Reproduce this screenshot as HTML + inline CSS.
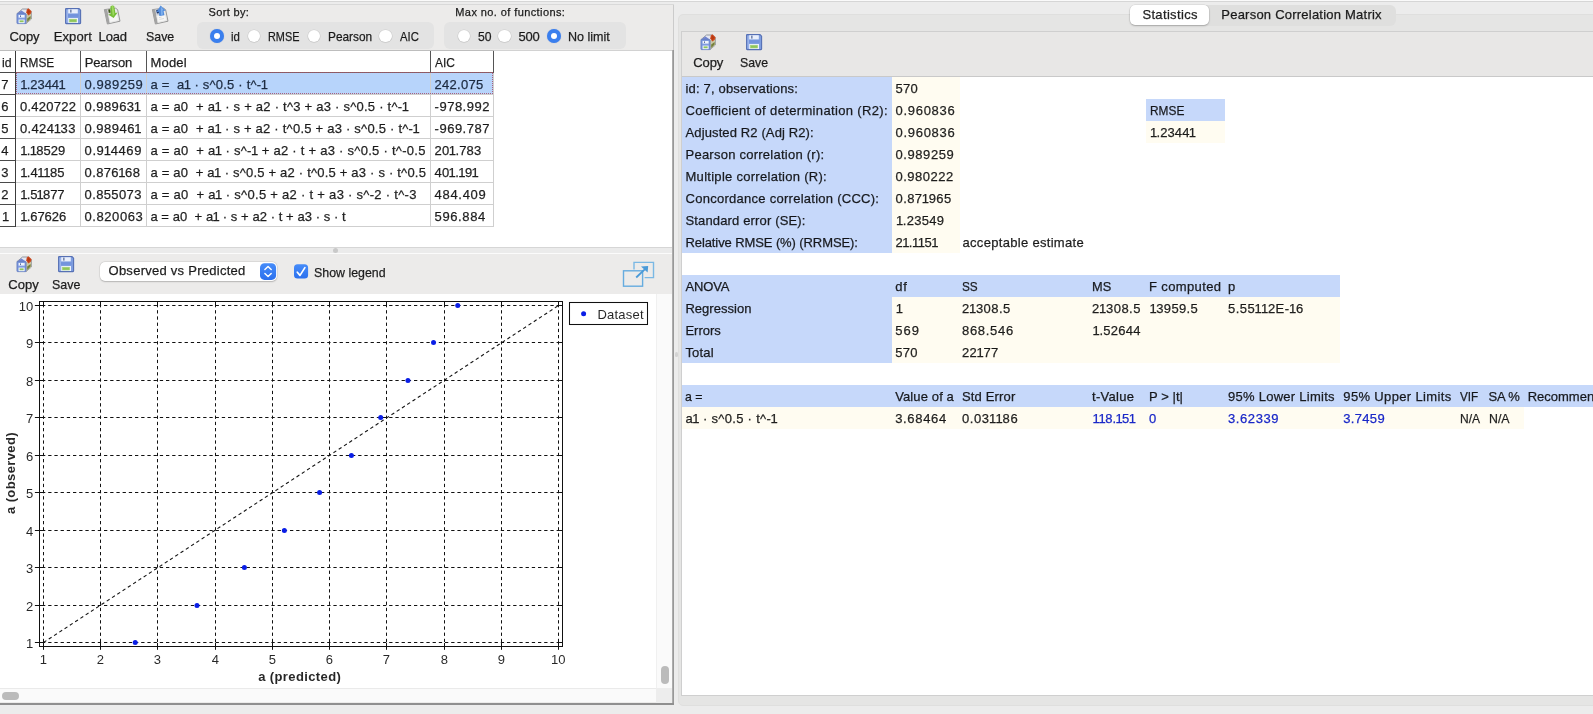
<!DOCTYPE html>
<html><head><meta charset="utf-8"><title>Statistics</title>
<style>
html,body{margin:0;padding:0;}
body{width:1593px;height:714px;overflow:hidden;background:#ececec;position:relative;font-family:"Liberation Sans",sans-serif;font-size:13px;color:rgba(0,0,0,.85);}
#app{position:absolute;left:0;top:0;width:1593px;height:714px;overflow:hidden;will-change:transform;}
.r{position:absolute;}
.t{position:absolute;white-space:pre;line-height:15px;-webkit-text-stroke:.25px currentColor;}
svg{overflow:visible;}
svg text{font-family:"Liberation Sans",sans-serif;}
</style></head><body>
<div id="app">
<div class="r" style="left:0px;top:0px;width:1593px;height:1px;background:#fafafa;"></div>
<div class="r" style="left:0px;top:1px;width:1593px;height:1px;background:#d6d6d6;"></div>
<div class="r" style="left:0px;top:4px;width:674px;height:701px;background:#ecebea;border-top:1px solid #d9d9d9;box-sizing:border-box;"></div>
<div class="r" style="left:673px;top:5px;width:1px;height:46px;background:#cbcbcb;"></div>
<div class="r" style="left:672px;top:50px;width:1px;height:655px;background:#adadad;"></div>
<div class="r" style="left:673px;top:50px;width:1px;height:655px;background:#989898;"></div>
<div class="r" style="left:0px;top:703px;width:674px;height:2px;background:#8f8f8f;"></div>
<div class="r" style="left:0px;top:51px;width:672px;height:196px;background:#fff;"></div>
<div class="r" style="left:0px;top:247px;width:672px;height:1px;background:#d6d6d6;"></div>
<div class="r" style="left:0px;top:248px;width:672px;height:5px;background:#ebebeb;"></div>
<div class="r" style="left:0px;top:253px;width:672px;height:1px;background:#fbfbfb;"></div>
<div class="r" style="left:332.5px;top:248px;width:5px;height:5px;background:#c9c9c9;border-radius:50%;"></div>
<div class="r" style="left:674.5px;top:352px;width:3.5px;height:5px;background:#d3d3d3;border-radius:2px;"></div>
<svg class="r" style="left:16px;top:8px" width="16" height="16" viewBox="0 0 16 16">
<path d="M1 5.6 L6.5 1 H12.5 L15.4 4 V11 L10 15.6 Z" fill="#e4e7f2" stroke="#8a8f98" stroke-width=".9"/>
<path d="M10 6 L15.2 4.2 V11 L10 15.4Z" fill="#c9c7a6"/>
<path d="M11.2 10.5 L14.6 8 V10.6 L11.2 14Z" fill="#75803a"/>
<path d="M1 5.6 L5.4 2.6 L10 5.6Z" fill="#6f83cf"/>
<rect x="1" y="5.6" width="9" height="10" rx=".6" fill="#7f9be0" stroke="#6079bf" stroke-width=".9"/>
<rect x="2.6" y="7" width="6" height="2.6" fill="#eef3fd"/>
<rect x="4" y="7.4" width="1" height="1.6" fill="#5d6f9c"/>
<rect x="2.6" y="11.6" width="6" height="3.6" fill="#eef3fd"/>
<rect x="3.6" y="12.4" width="4" height="1.8" fill="#8fc65a"/>
<path d="M12.4 0.2 L15.6 3.2 L14.8 5.8 L12.4 7.6 L10.2 4.6 L10.8 1.6Z" fill="#cf4a1e"/>
<path d="M12.2 1.2 L14.4 3.4 L12.6 6.2 L11.2 4.2Z" fill="#b83a14"/>
</svg>
<svg class="r" style="left:65px;top:8px" width="16" height="16" viewBox="0 0 16 16">
<path d="M1.2 0.6 H14 L15.6 2.2 V15 Q15.6 15.6 15 15.6 H1.2 Q0.6 15.6 0.6 15 V1.2 Q0.6 0.6 1.2 0.6Z" fill="#7f9ee0" stroke="#5670b4" stroke-width="1.1"/>
<rect x="1.6" y="1.6" width="1.2" height="13" fill="#a9bff0" opacity=".8"/>
<rect x="3.2" y="1.2" width="9.6" height="4.2" fill="#e9effc"/>
<rect x="5.2" y="1.6" width="1.3" height="3" fill="#5d6f9c"/>
<rect x="3" y="6.2" width="10.6" height="2.6" fill="#6c8fdc" opacity=".7"/>
<rect x="3.2" y="10" width="9.8" height="5" fill="#eef3fd"/>
<rect x="4.4" y="11.2" width="7.2" height="2.8" fill="#8fc65a" stroke="#a5d27a" stroke-width=".6"/>
</svg>
<svg class="r" style="left:103px;top:5px" width="18" height="20" viewBox="0 0 18 20">
<path d="M1.4 4.6 L12.6 3.2 L14.6 4.6 L17 16.2 L4.4 19 Z" fill="#e9e9e8" stroke="#8e8e8e" stroke-width=".9"/>
<path d="M1.4 4.6 L4.2 4.2 L6.8 18.4 L4.4 19Z" fill="#a3a3a3"/>
<path d="M4.6 4.4 L10.4 3.6 L11.4 9.4 L5.6 10.4Z" fill="#d6d6d6"/>
<path d="M5.2 4.6 L7.2 4.3 L7.8 7.6 L5.8 8Z" fill="#3d5518"/>
<path d="M5.6 10.8 L14.4 9.2 L15.6 15.4 L7 17.4Z" fill="#f6f6f5" stroke="#dcdcdc" stroke-width=".5"/>
<path d="M7.4 1.4 Q9.4 0 11.2 1 L12.4 8 L14.6 7.6 L10.6 13 L5.2 9.4 L7.6 9 Z" fill="#74bd36"/>
<path d="M8.6 1.2 Q9.6 .6 10.4 1 L11.4 9 L9.8 11.6Z" fill="#a6de66" opacity=".85"/>
</svg>
<svg class="r" style="left:151px;top:5px" width="18" height="20" viewBox="0 0 18 20">
<path d="M1.4 4.6 L12.6 3.2 L14.6 4.6 L17 16.2 L4.4 19 Z" fill="#e9e9e8" stroke="#8e8e8e" stroke-width=".9"/>
<path d="M1.4 4.6 L4.2 4.2 L6.8 18.4 L4.4 19Z" fill="#a3a3a3"/>
<path d="M4.6 4.4 L10.4 3.6 L11.4 9.4 L5.6 10.4Z" fill="#c8cfdc"/>
<path d="M5.2 5 L7.6 4.4 L8.4 8 L6 8.6Z" fill="#1f3566"/>
<path d="M5.6 10.8 L14.4 9.2 L15.6 15.4 L7 17.4Z" fill="#f6f6f5" stroke="#dcdcdc" stroke-width=".5"/>
<path d="M8 12.6 L10.6 12.1 M8.4 14.4 L13 13.5" stroke="#d0d0d0" stroke-width=".7"/>
<path d="M9.6 .6 L14.8 5.6 L12.6 6 L13.4 10.2 L8.4 11 L7.6 6.8 L5.4 7.2 Z" fill="#528cdc"/>
<path d="M9.8 1.6 L12.6 5 L11.4 5.4 L12 9.6 L10 10Z" fill="#86b6f0" opacity=".85"/>
</svg>
<span class="t " style="left:9.40px;top:28.50px;letter-spacing:-0.058px;">Copy</span>
<span class="t " style="left:53.70px;top:28.50px;letter-spacing:0.107px;">Export</span>
<span class="t " style="left:98.60px;top:28.50px;letter-spacing:-0.179px;">Load</span>
<span class="t " style="left:146.40px;top:28.50px;transform:scaleX(0.9519);transform-origin:0 0;">Save</span>
<span class="t " style="left:208.50px;top:5.85px;font-size:11px;line-height:13px;letter-spacing:0.352px;">Sort by:</span>
<div class="r" style="left:197px;top:22px;width:237px;height:26.5px;background:#e3e3e3;border-radius:6px;"></div>
<div class="r" style="left:209.9px;top:29px;width:14px;height:14px;border-radius:50%;background:#3a7fee;box-shadow:0 0 1px rgba(40,90,200,.4);"></div>
<div class="r" style="left:213.8px;top:32.9px;width:6.2px;height:6.2px;border-radius:50%;background:#fff;"></div>
<span class="t " style="left:230.50px;top:28.80px;transform:scaleX(0.8790);transform-origin:0 0;">id</span>
<div class="r" style="left:247.6px;top:29.7px;width:12.6px;height:12.6px;border-radius:50%;background:#fff;box-shadow:0 0 0 .6px rgba(0,0,0,.09),0 .5px 1px rgba(0,0,0,.1);"></div>
<span class="t " style="left:267.70px;top:28.80px;transform:scaleX(0.8359);transform-origin:0 0;">RMSE</span>
<div class="r" style="left:307.7px;top:29.7px;width:12.6px;height:12.6px;border-radius:50%;background:#fff;box-shadow:0 0 0 .6px rgba(0,0,0,.09),0 .5px 1px rgba(0,0,0,.1);"></div>
<span class="t " style="left:327.80px;top:28.80px;transform:scaleX(0.9125);transform-origin:0 0;">Pearson</span>
<div class="r" style="left:379.2px;top:29.7px;width:12.6px;height:12.6px;border-radius:50%;background:#fff;box-shadow:0 0 0 .6px rgba(0,0,0,.09),0 .5px 1px rgba(0,0,0,.1);"></div>
<span class="t " style="left:399.50px;top:28.80px;transform:scaleX(0.8669);transform-origin:0 0;">AIC</span>
<span class="t " style="left:455.30px;top:5.85px;font-size:11px;line-height:13px;letter-spacing:0.405px;">Max no. of functions:</span>
<div class="r" style="left:444px;top:22px;width:182px;height:26.5px;background:#e3e3e3;border-radius:6px;"></div>
<div class="r" style="left:457.7px;top:29.7px;width:12.6px;height:12.6px;border-radius:50%;background:#fff;box-shadow:0 0 0 .6px rgba(0,0,0,.09),0 .5px 1px rgba(0,0,0,.1);"></div>
<span class="t " style="left:477.70px;top:28.80px;transform:scaleX(0.9351);transform-origin:0 0;">50</span>
<div class="r" style="left:498.4px;top:29.7px;width:12.6px;height:12.6px;border-radius:50%;background:#fff;box-shadow:0 0 0 .6px rgba(0,0,0,.09),0 .5px 1px rgba(0,0,0,.1);"></div>
<span class="t " style="left:518.50px;top:28.80px;letter-spacing:-0.194px;">500</span>
<div class="r" style="left:547px;top:29px;width:14px;height:14px;border-radius:50%;background:#3a7fee;box-shadow:0 0 1px rgba(40,90,200,.4);"></div>
<div class="r" style="left:550.9px;top:32.9px;width:6.2px;height:6.2px;border-radius:50%;background:#fff;"></div>
<span class="t " style="left:567.70px;top:28.80px;transform:scaleX(0.9651);transform-origin:0 0;">No limit</span>
<div class="r" style="left:0px;top:50px;width:672px;height:1px;background:#d2d2d2;"></div>
<div class="r" style="left:0px;top:50px;width:494px;height:1px;background:#bdbdbd;"></div>
<div class="r" style="left:16px;top:73px;width:477px;height:21px;background:#b7d4fb;"></div>
<div class="r" style="left:0px;top:72px;width:15px;height:1px;background:#4a4a4a;"></div>
<div class="r" style="left:16px;top:72px;width:478px;height:1px;background:#7d6a6a;"></div>
<div class="r" style="left:0px;top:94px;width:15px;height:1px;background:#4a4a4a;"></div>
<div class="r" style="left:16px;top:94px;width:478px;height:1px;background:#cfcfcf;"></div>
<div class="r" style="left:0px;top:116px;width:15px;height:1px;background:#4a4a4a;"></div>
<div class="r" style="left:16px;top:116px;width:478px;height:1px;background:#cfcfcf;"></div>
<div class="r" style="left:0px;top:138px;width:15px;height:1px;background:#4a4a4a;"></div>
<div class="r" style="left:16px;top:138px;width:478px;height:1px;background:#cfcfcf;"></div>
<div class="r" style="left:0px;top:160px;width:15px;height:1px;background:#4a4a4a;"></div>
<div class="r" style="left:16px;top:160px;width:478px;height:1px;background:#cfcfcf;"></div>
<div class="r" style="left:0px;top:182px;width:15px;height:1px;background:#4a4a4a;"></div>
<div class="r" style="left:16px;top:182px;width:478px;height:1px;background:#cfcfcf;"></div>
<div class="r" style="left:0px;top:204px;width:15px;height:1px;background:#4a4a4a;"></div>
<div class="r" style="left:16px;top:204px;width:478px;height:1px;background:#cfcfcf;"></div>
<div class="r" style="left:0px;top:226px;width:15px;height:1px;background:#4a4a4a;"></div>
<div class="r" style="left:16px;top:226px;width:478px;height:1px;background:#cfcfcf;"></div>
<div class="r" style="left:15px;top:51px;width:1px;height:176px;background:#3c3c3c;"></div>
<div class="r" style="left:80px;top:51px;width:1px;height:22px;background:#555;"></div>
<div class="r" style="left:80px;top:73px;width:1px;height:154px;background:#cfcfcf;"></div>
<div class="r" style="left:146px;top:51px;width:1px;height:22px;background:#555;"></div>
<div class="r" style="left:146px;top:73px;width:1px;height:154px;background:#cfcfcf;"></div>
<div class="r" style="left:430px;top:51px;width:1px;height:22px;background:#555;"></div>
<div class="r" style="left:430px;top:73px;width:1px;height:154px;background:#cfcfcf;"></div>
<div class="r" style="left:493px;top:51px;width:1px;height:22px;background:#555;"></div>
<div class="r" style="left:493px;top:73px;width:1px;height:154px;background:#cfcfcf;"></div>
<div class="r" style="left:15.5px;top:72px;width:477.5px;height:22px;box-sizing:border-box;border:1px dotted rgba(165,70,95,.8);"></div>
<span class="t " style="left:1.50px;top:54.70px;transform:scaleX(0.9481);transform-origin:0 0;">id</span>
<span class="t " style="left:19.60px;top:54.70px;transform:scaleX(0.9105);transform-origin:0 0;">RMSE</span>
<span class="t " style="left:84.70px;top:54.70px;letter-spacing:-0.140px;">Pearson</span>
<span class="t " style="left:150.60px;top:54.70px;letter-spacing:0.141px;">Model</span>
<span class="t " style="left:434.60px;top:54.70px;transform:scaleX(0.9176);transform-origin:0 0;">AIC</span>
<span class="t " style="left:1.30px;top:76.80px;">7</span>
<span class="t " style="left:20.90px;top:76.80px;color:#1d2b40;letter-spacing:-0.033px;"><span style="margin-left:-0.7px;letter-spacing:-0.733px">1</span>.2344<span style="margin-left:-0.7px;letter-spacing:-0.733px">1</span></span>
<span class="t " style="left:84.60px;top:76.80px;color:#1d2b40;letter-spacing:0.550px;">0.989259</span>
<span class="t " style="left:150.40px;top:76.80px;color:#1d2b40;letter-spacing:0.210px;">a =  a<span style="margin-left:-0.7px;letter-spacing:-0.490px">1</span> · s^0.5 · t^-<span style="margin-left:-0.7px;letter-spacing:-0.490px">1</span></span>
<span class="t " style="left:434.60px;top:76.80px;color:#1d2b40;letter-spacing:0.267px;">242.075</span>
<span class="t " style="left:1.30px;top:98.80px;">6</span>
<span class="t " style="left:19.90px;top:98.80px;letter-spacing:0.264px;">0.420722</span>
<span class="t " style="left:84.60px;top:98.80px;letter-spacing:0.407px;">0.98963<span style="margin-left:-0.7px;letter-spacing:-0.293px">1</span></span>
<span class="t " style="left:150.40px;top:98.80px;letter-spacing:0.240px;">a = a0  + a<span style="margin-left:-0.7px;letter-spacing:-0.460px">1</span> · s + a2 · t^3 + a3 · s^0.5 · t^-<span style="margin-left:-0.7px;letter-spacing:-0.460px">1</span></span>
<span class="t " style="left:434.60px;top:98.80px;letter-spacing:0.498px;">-978.992</span>
<span class="t " style="left:1.30px;top:120.80px;">5</span>
<span class="t " style="left:19.90px;top:120.80px;letter-spacing:0.379px;">0.424<span style="margin-left:-0.7px;letter-spacing:-0.321px">1</span>33</span>
<span class="t " style="left:84.60px;top:120.80px;letter-spacing:0.464px;">0.98946<span style="margin-left:-0.7px;letter-spacing:-0.236px">1</span></span>
<span class="t " style="left:150.40px;top:120.80px;letter-spacing:0.228px;">a = a0  + a<span style="margin-left:-0.7px;letter-spacing:-0.472px">1</span> · s + a2 · t^0.5 + a3 · s^0.5 · t^-<span style="margin-left:-0.7px;letter-spacing:-0.472px">1</span></span>
<span class="t " style="left:434.60px;top:120.80px;letter-spacing:0.498px;">-969.787</span>
<span class="t " style="left:1.30px;top:142.80px;">4</span>
<span class="t " style="left:20.90px;top:142.80px;"><span style="margin-left:-0.7px;letter-spacing:-0.700px">1</span>.<span style="margin-left:-0.7px;letter-spacing:-0.700px">1</span>8529</span>
<span class="t " style="left:84.60px;top:142.80px;letter-spacing:0.564px;">0.9<span style="margin-left:-0.7px;letter-spacing:-0.136px">1</span>4469</span>
<span class="t " style="left:150.40px;top:142.80px;letter-spacing:0.266px;">a = a0  + a<span style="margin-left:-0.7px;letter-spacing:-0.434px">1</span> · s^-<span style="margin-left:-0.7px;letter-spacing:-0.434px">1</span> + a2 · t + a3 · s^0.5 · t^-0.5</span>
<span class="t " style="left:434.60px;top:142.80px;letter-spacing:0.167px;">20<span style="margin-left:-0.7px;letter-spacing:-0.533px">1</span>.783</span>
<span class="t " style="left:1.30px;top:164.80px;">3</span>
<span class="t " style="left:20.90px;top:164.80px;letter-spacing:0.117px;"><span style="margin-left:-0.7px;letter-spacing:-0.583px">1</span>.4<span style="margin-left:-0.7px;letter-spacing:-0.583px">1</span><span style="margin-left:-0.7px;letter-spacing:-0.583px">1</span>85</span>
<span class="t " style="left:84.60px;top:164.80px;letter-spacing:0.350px;">0.876<span style="margin-left:-0.7px;letter-spacing:-0.350px">1</span>68</span>
<span class="t " style="left:150.40px;top:164.80px;letter-spacing:0.203px;">a = a0  + a<span style="margin-left:-0.7px;letter-spacing:-0.497px">1</span> · s^0.5 + a2 · t^0.5 + a3 · s · t^0.5</span>
<span class="t " style="left:434.60px;top:164.80px;letter-spacing:0.100px;">40<span style="margin-left:-0.7px;letter-spacing:-0.600px">1</span>.<span style="margin-left:-0.7px;letter-spacing:-0.600px">1</span>9<span style="margin-left:-0.7px;letter-spacing:-0.600px">1</span></span>
<span class="t " style="left:1.30px;top:186.80px;">2</span>
<span class="t " style="left:20.90px;top:186.80px;letter-spacing:-0.100px;"><span style="margin-left:-0.7px;letter-spacing:-0.800px">1</span>.5<span style="margin-left:-0.7px;letter-spacing:-0.800px">1</span>877</span>
<span class="t " style="left:84.60px;top:186.80px;letter-spacing:0.364px;">0.855073</span>
<span class="t " style="left:150.40px;top:186.80px;letter-spacing:0.288px;">a = a0  + a<span style="margin-left:-0.7px;letter-spacing:-0.412px">1</span> · s^0.5 + a2 · t + a3 · s^-2 · t^-3</span>
<span class="t " style="left:434.60px;top:186.80px;letter-spacing:0.683px;">484.409</span>
<span class="t " style="left:2.00px;top:208.80px;">1</span>
<span class="t " style="left:20.90px;top:208.80px;letter-spacing:-0.050px;"><span style="margin-left:-0.7px;letter-spacing:-0.750px">1</span>.67626</span>
<span class="t " style="left:84.60px;top:208.80px;letter-spacing:0.550px;">0.820063</span>
<span class="t " style="left:150.40px;top:208.80px;letter-spacing:0.060px;">a = a0  + a<span style="margin-left:-0.7px;letter-spacing:-0.640px">1</span> · s + a2 · t + a3 · s · t</span>
<span class="t " style="left:434.60px;top:208.80px;letter-spacing:0.600px;">596.884</span>
<svg class="r" style="left:16px;top:256px" width="16" height="16" viewBox="0 0 16 16">
<path d="M1 5.6 L6.5 1 H12.5 L15.4 4 V11 L10 15.6 Z" fill="#e4e7f2" stroke="#8a8f98" stroke-width=".9"/>
<path d="M10 6 L15.2 4.2 V11 L10 15.4Z" fill="#c9c7a6"/>
<path d="M11.2 10.5 L14.6 8 V10.6 L11.2 14Z" fill="#75803a"/>
<path d="M1 5.6 L5.4 2.6 L10 5.6Z" fill="#6f83cf"/>
<rect x="1" y="5.6" width="9" height="10" rx=".6" fill="#7f9be0" stroke="#6079bf" stroke-width=".9"/>
<rect x="2.6" y="7" width="6" height="2.6" fill="#eef3fd"/>
<rect x="4" y="7.4" width="1" height="1.6" fill="#5d6f9c"/>
<rect x="2.6" y="11.6" width="6" height="3.6" fill="#eef3fd"/>
<rect x="3.6" y="12.4" width="4" height="1.8" fill="#8fc65a"/>
<path d="M12.4 0.2 L15.6 3.2 L14.8 5.8 L12.4 7.6 L10.2 4.6 L10.8 1.6Z" fill="#cf4a1e"/>
<path d="M12.2 1.2 L14.4 3.4 L12.6 6.2 L11.2 4.2Z" fill="#b83a14"/>
</svg>
<svg class="r" style="left:58px;top:256px" width="16" height="16" viewBox="0 0 16 16">
<path d="M1.2 0.6 H14 L15.6 2.2 V15 Q15.6 15.6 15 15.6 H1.2 Q0.6 15.6 0.6 15 V1.2 Q0.6 0.6 1.2 0.6Z" fill="#7f9ee0" stroke="#5670b4" stroke-width="1.1"/>
<rect x="1.6" y="1.6" width="1.2" height="13" fill="#a9bff0" opacity=".8"/>
<rect x="3.2" y="1.2" width="9.6" height="4.2" fill="#e9effc"/>
<rect x="5.2" y="1.6" width="1.3" height="3" fill="#5d6f9c"/>
<rect x="3" y="6.2" width="10.6" height="2.6" fill="#6c8fdc" opacity=".7"/>
<rect x="3.2" y="10" width="9.8" height="5" fill="#eef3fd"/>
<rect x="4.4" y="11.2" width="7.2" height="2.8" fill="#8fc65a" stroke="#a5d27a" stroke-width=".6"/>
</svg>
<span class="t " style="left:8.30px;top:277.00px;letter-spacing:0.075px;">Copy</span>
<span class="t " style="left:51.50px;top:277.00px;transform:scaleX(0.9553);transform-origin:0 0;">Save</span>
<div class="r" style="left:100px;top:261.8px;width:177.4px;height:19.3px;border-radius:5px;background:#fff;box-shadow:0 0 0 .5px rgba(0,0,0,.08),0 .5px 1.5px rgba(0,0,0,.2);"></div>
<svg class="r" style="left:0;top:0" width="672" height="300" viewBox="0 0 672 300"><defs><linearGradient id="bg1" x1="0" y1="0" x2="0" y2="1"><stop offset="0" stop-color="#468cf9"/><stop offset="1" stop-color="#2b70ee"/></linearGradient></defs><rect x="260" y="263.3" width="16.1" height="16.6" rx="4.5" fill="url(#bg1)"/><path d="M264.9 269.5 L268.05 266.5 L271.2 269.5 M264.9 273.5 L268.05 276.5 L271.2 273.5" fill="none" stroke="#fff" stroke-width="1.45" stroke-linecap="round" stroke-linejoin="round"/><rect x="294" y="264.3" width="14.1" height="14.3" rx="3.5" fill="url(#bg1)"/><path d="M297.3 272.2 L300 275.4 L304.9 267.6" fill="none" stroke="#fff" stroke-width="1.7" stroke-linecap="round" stroke-linejoin="round"/></svg>
<span class="t " style="left:108.50px;top:263.30px;letter-spacing:0.265px;">Observed vs Predicted</span>
<span class="t " style="left:314.40px;top:265.00px;transform:scaleX(0.9523);transform-origin:0 0;">Show legend</span>
<svg class="r" style="left:616px;top:256px" width="45" height="36" viewBox="616 256 45 36">
<path d="M634 269.6 V262.4 H653.5 V277.6 H644.6" fill="none" stroke="#7ab8e4" stroke-width="1.4"/>
<rect x="623.5" y="270.8" width="19.1" height="15.4" fill="none" stroke="#66acdf" stroke-width="1.4"/>
<path d="M636.2 277.5 L645 269.2" stroke="#4a9ad8" stroke-width="1.8" fill="none"/>
<path d="M641 266.4 L648.2 266.1 L647.6 272.6 Z" fill="#4a9ad8"/>
</svg>
<div class="r" style="left:0px;top:294px;width:656px;height:394px;background:#fff;"></div>
<div class="r" style="left:656px;top:294px;width:16px;height:394px;background:#fafafa;border-left:1px solid #f0f0f0;box-sizing:border-box;"></div>
<div class="r" style="left:0px;top:688px;width:672px;height:14px;background:#fafafa;border-top:1px solid #eaeaea;box-sizing:border-box;"></div>
<div class="r" style="left:656px;top:688px;width:16px;height:15px;background:#ededed;"></div>
<div class="r" style="left:1.5px;top:692px;width:17.5px;height:7.5px;background:#bbbbbb;border-radius:4px;"></div>
<div class="r" style="left:661px;top:666px;width:7.5px;height:17.5px;background:#bbbbbb;border-radius:4px;"></div>
<svg class="r" style="left:0;top:0" width="672" height="714" viewBox="0 0 672 714">
<path d="M43.50 304.0 V644.0 M100.50 304.0 V644.0 M157.50 304.0 V644.0 M215.50 304.0 V644.0 M272.50 304.0 V644.0 M329.50 304.0 V644.0 M386.50 304.0 V644.0 M444.50 304.0 V644.0 M501.50 304.0 V644.0 M558.50 304.0 V644.0 M42.0 642.50 H560.5 M42.0 605.50 H560.5 M42.0 567.50 H560.5 M42.0 530.50 H560.5 M42.0 492.50 H560.5 M42.0 455.50 H560.5 M42.0 417.50 H560.5 M42.0 380.50 H560.5 M42.0 342.50 H560.5 M42.0 305.50 H560.5" stroke="#111" stroke-width="1" stroke-dasharray="3.3 2.9" fill="none"/>
<rect x="39.5" y="301.5" width="523.0" height="345.0" fill="none" stroke="#111" stroke-width="1"/>
<path d="M43.50 643.0 V649.8 M43.50 301.5 V304.5 M34.9 642.50 H42.5 M559.5 642.50 H562.5 M100.50 643.0 V649.8 M100.50 301.5 V304.5 M34.9 605.50 H42.5 M559.5 605.50 H562.5 M157.50 643.0 V649.8 M157.50 301.5 V304.5 M34.9 567.50 H42.5 M559.5 567.50 H562.5 M215.50 643.0 V649.8 M215.50 301.5 V304.5 M34.9 530.50 H42.5 M559.5 530.50 H562.5 M272.50 643.0 V649.8 M272.50 301.5 V304.5 M34.9 492.50 H42.5 M559.5 492.50 H562.5 M329.50 643.0 V649.8 M329.50 301.5 V304.5 M34.9 455.50 H42.5 M559.5 455.50 H562.5 M386.50 643.0 V649.8 M386.50 301.5 V304.5 M34.9 417.50 H42.5 M559.5 417.50 H562.5 M444.50 643.0 V649.8 M444.50 301.5 V304.5 M34.9 380.50 H42.5 M559.5 380.50 H562.5 M501.50 643.0 V649.8 M501.50 301.5 V304.5 M34.9 342.50 H42.5 M559.5 342.50 H562.5 M558.50 643.0 V649.8 M558.50 301.5 V304.5 M34.9 305.50 H42.5 M559.5 305.50 H562.5" stroke="#111" stroke-width="1" fill="none"/>
<path d="M43.5 642.5 L558.5 305.5" stroke="#151515" stroke-width="1.1" stroke-dasharray="3.4 2.9" fill="none"/>
<circle cx="135.21" cy="642.50" r="2.5" fill="#0a1ee6"/>
<circle cx="196.99" cy="605.50" r="2.5" fill="#0a1ee6"/>
<circle cx="244.40" cy="567.50" r="2.5" fill="#0a1ee6"/>
<circle cx="284.37" cy="530.50" r="2.5" fill="#0a1ee6"/>
<circle cx="319.58" cy="492.50" r="2.5" fill="#0a1ee6"/>
<circle cx="351.41" cy="455.50" r="2.5" fill="#0a1ee6"/>
<circle cx="380.69" cy="417.50" r="2.5" fill="#0a1ee6"/>
<circle cx="407.94" cy="380.50" r="2.5" fill="#0a1ee6"/>
<circle cx="433.53" cy="342.50" r="2.5" fill="#0a1ee6"/>
<circle cx="457.73" cy="305.50" r="2.5" fill="#0a1ee6"/>
<text x="43.30" y="663.8" font-size="13" fill="#000" fill-opacity=".85" text-anchor="middle">1</text>
<text x="33.3" y="648.00" font-size="13" fill="#000" fill-opacity=".85" text-anchor="end">1</text>
<text x="100.30" y="663.8" font-size="13" fill="#000" fill-opacity=".85" text-anchor="middle">2</text>
<text x="33.3" y="611.00" font-size="13" fill="#000" fill-opacity=".85" text-anchor="end">2</text>
<text x="157.30" y="663.8" font-size="13" fill="#000" fill-opacity=".85" text-anchor="middle">3</text>
<text x="33.3" y="573.00" font-size="13" fill="#000" fill-opacity=".85" text-anchor="end">3</text>
<text x="215.30" y="663.8" font-size="13" fill="#000" fill-opacity=".85" text-anchor="middle">4</text>
<text x="33.3" y="536.00" font-size="13" fill="#000" fill-opacity=".85" text-anchor="end">4</text>
<text x="272.30" y="663.8" font-size="13" fill="#000" fill-opacity=".85" text-anchor="middle">5</text>
<text x="33.3" y="498.00" font-size="13" fill="#000" fill-opacity=".85" text-anchor="end">5</text>
<text x="329.30" y="663.8" font-size="13" fill="#000" fill-opacity=".85" text-anchor="middle">6</text>
<text x="33.3" y="461.00" font-size="13" fill="#000" fill-opacity=".85" text-anchor="end">6</text>
<text x="386.30" y="663.8" font-size="13" fill="#000" fill-opacity=".85" text-anchor="middle">7</text>
<text x="33.3" y="423.00" font-size="13" fill="#000" fill-opacity=".85" text-anchor="end">7</text>
<text x="444.30" y="663.8" font-size="13" fill="#000" fill-opacity=".85" text-anchor="middle">8</text>
<text x="33.3" y="386.00" font-size="13" fill="#000" fill-opacity=".85" text-anchor="end">8</text>
<text x="501.30" y="663.8" font-size="13" fill="#000" fill-opacity=".85" text-anchor="middle">9</text>
<text x="33.3" y="348.00" font-size="13" fill="#000" fill-opacity=".85" text-anchor="end">9</text>
<text x="558.30" y="663.8" font-size="13" fill="#000" fill-opacity=".85" text-anchor="middle">10</text>
<text x="33.3" y="311.00" font-size="13" fill="#000" fill-opacity=".85" text-anchor="end">10</text>
<text x="299.7" y="680.9" font-size="13" font-weight="bold" letter-spacing=".38" fill="#000" fill-opacity=".85" text-anchor="middle">a (predicted)</text>
<text transform="translate(14.6 473) rotate(-90)" font-size="13" font-weight="bold" letter-spacing=".38" fill="#000" fill-opacity=".85" text-anchor="middle">a (observed)</text>
<rect x="569.5" y="302.5" width="78" height="22" fill="#fff" stroke="#111" stroke-width="1.05"/>
<circle cx="583.6" cy="313.8" r="2.5" fill="#0a1ee6"/>
<text x="597.4" y="318.7" font-size="13" letter-spacing=".25" fill="#000" fill-opacity=".85">Dataset</text>
</svg>
<div class="r" style="left:678px;top:14px;width:920px;height:691.5px;background:#e5e5e4;border-radius:5px;border:1px solid #dfdfde;box-sizing:border-box;"></div>
<div class="r" style="left:1129.5px;top:4.5px;width:266px;height:21px;background:#dfdfde;border-radius:6px;"></div>
<div class="r" style="left:1130px;top:5px;width:79px;height:20px;border-radius:5px;background:#fff;box-shadow:0 0 0 .5px rgba(0,0,0,.1),0 1px 2px rgba(0,0,0,.22);"></div>
<span class="t " style="left:1142.40px;top:6.70px;letter-spacing:0.344px;">Statistics</span>
<span class="t " style="left:1221.30px;top:6.70px;letter-spacing:0.227px;">Pearson Correlation Matrix</span>
<div class="r" style="left:681px;top:31px;width:915px;height:665px;background:#fff;border:1px solid #cfcfcf;box-sizing:border-box;"></div>
<div class="r" style="left:682px;top:32px;width:912px;height:44px;background:#e8e7e6;"></div>
<div class="r" style="left:682px;top:75.5px;width:912px;height:1.5px;background:#c9c9c9;"></div>
<svg class="r" style="left:700px;top:34px" width="16" height="16" viewBox="0 0 16 16">
<path d="M1 5.6 L6.5 1 H12.5 L15.4 4 V11 L10 15.6 Z" fill="#e4e7f2" stroke="#8a8f98" stroke-width=".9"/>
<path d="M10 6 L15.2 4.2 V11 L10 15.4Z" fill="#c9c7a6"/>
<path d="M11.2 10.5 L14.6 8 V10.6 L11.2 14Z" fill="#75803a"/>
<path d="M1 5.6 L5.4 2.6 L10 5.6Z" fill="#6f83cf"/>
<rect x="1" y="5.6" width="9" height="10" rx=".6" fill="#7f9be0" stroke="#6079bf" stroke-width=".9"/>
<rect x="2.6" y="7" width="6" height="2.6" fill="#eef3fd"/>
<rect x="4" y="7.4" width="1" height="1.6" fill="#5d6f9c"/>
<rect x="2.6" y="11.6" width="6" height="3.6" fill="#eef3fd"/>
<rect x="3.6" y="12.4" width="4" height="1.8" fill="#8fc65a"/>
<path d="M12.4 0.2 L15.6 3.2 L14.8 5.8 L12.4 7.6 L10.2 4.6 L10.8 1.6Z" fill="#cf4a1e"/>
<path d="M12.2 1.2 L14.4 3.4 L12.6 6.2 L11.2 4.2Z" fill="#b83a14"/>
</svg>
<svg class="r" style="left:746px;top:34px" width="16" height="16" viewBox="0 0 16 16">
<path d="M1.2 0.6 H14 L15.6 2.2 V15 Q15.6 15.6 15 15.6 H1.2 Q0.6 15.6 0.6 15 V1.2 Q0.6 0.6 1.2 0.6Z" fill="#7f9ee0" stroke="#5670b4" stroke-width="1.1"/>
<rect x="1.6" y="1.6" width="1.2" height="13" fill="#a9bff0" opacity=".8"/>
<rect x="3.2" y="1.2" width="9.6" height="4.2" fill="#e9effc"/>
<rect x="5.2" y="1.6" width="1.3" height="3" fill="#5d6f9c"/>
<rect x="3" y="6.2" width="10.6" height="2.6" fill="#6c8fdc" opacity=".7"/>
<rect x="3.2" y="10" width="9.8" height="5" fill="#eef3fd"/>
<rect x="4.4" y="11.2" width="7.2" height="2.8" fill="#8fc65a" stroke="#a5d27a" stroke-width=".6"/>
</svg>
<span class="t " style="left:693.30px;top:55.30px;letter-spacing:-0.092px;">Copy</span>
<span class="t " style="left:739.70px;top:55.30px;transform:scaleX(0.9451);transform-origin:0 0;">Save</span>
<div class="r" style="left:682px;top:77px;width:210px;height:176px;background:#c6d8fa;"></div>
<div class="r" style="left:892px;top:77px;width:67.5px;height:176px;background:#fffcf1;"></div>
<span class="t " style="left:685.50px;top:80.60px;letter-spacing:0.172px;">id: 7, observations:</span>
<span class="t " style="left:895.50px;top:80.60px;letter-spacing:0.256px;">570</span>
<span class="t " style="left:685.50px;top:102.60px;letter-spacing:0.353px;">Coefficient of determination (R2):</span>
<span class="t " style="left:895.50px;top:102.60px;letter-spacing:0.707px;">0.960836</span>
<span class="t " style="left:685.50px;top:124.60px;letter-spacing:0.123px;">Adjusted R2 (Adj R2):</span>
<span class="t " style="left:895.50px;top:124.60px;letter-spacing:0.707px;">0.960836</span>
<span class="t " style="left:685.50px;top:146.60px;letter-spacing:0.246px;">Pearson correlation (r):</span>
<span class="t " style="left:895.50px;top:146.60px;letter-spacing:0.579px;">0.989259</span>
<span class="t " style="left:685.50px;top:168.60px;letter-spacing:0.284px;">Multiple correlation (R):</span>
<span class="t " style="left:895.50px;top:168.60px;letter-spacing:0.493px;">0.980222</span>
<span class="t " style="left:685.50px;top:190.60px;letter-spacing:0.269px;">Concordance correlation (CCC):</span>
<span class="t " style="left:895.50px;top:190.60px;letter-spacing:0.407px;">0.87<span style="margin-left:-0.7px;letter-spacing:-0.293px">1</span>965</span>
<span class="t " style="left:685.50px;top:212.60px;letter-spacing:0.149px;">Standard error (SE):</span>
<span class="t " style="left:896.70px;top:212.60px;letter-spacing:0.283px;"><span style="margin-left:-0.7px;letter-spacing:-0.417px">1</span>.23549</span>
<span class="t " style="left:685.50px;top:234.60px;letter-spacing:-0.097px;">Relative RMSE (%) (RRMSE):</span>
<span class="t " style="left:895.50px;top:234.60px;letter-spacing:0.117px;">2<span style="margin-left:-0.7px;letter-spacing:-0.583px">1</span>.<span style="margin-left:-0.7px;letter-spacing:-0.583px">1</span><span style="margin-left:-0.7px;letter-spacing:-0.583px">1</span>5<span style="margin-left:-0.7px;letter-spacing:-0.583px">1</span></span>
<span class="t " style="left:962.50px;top:234.60px;letter-spacing:0.310px;">acceptable estimate</span>
<div class="r" style="left:1146px;top:99px;width:79px;height:22px;background:#c6d8fa;"></div>
<div class="r" style="left:1146px;top:121px;width:79px;height:22px;background:#fffcf1;"></div>
<span class="t " style="left:1149.50px;top:102.60px;transform:scaleX(0.9131);transform-origin:0 0;">RMSE</span>
<span class="t " style="left:1150.60px;top:124.60px;letter-spacing:0.083px;"><span style="margin-left:-0.7px;letter-spacing:-0.617px">1</span>.2344<span style="margin-left:-0.7px;letter-spacing:-0.617px">1</span></span>
<div class="r" style="left:682px;top:275px;width:658px;height:22px;background:#c6d8fa;"></div>
<div class="r" style="left:682px;top:297px;width:210px;height:66px;background:#c6d8fa;"></div>
<div class="r" style="left:892px;top:297px;width:448px;height:66px;background:#fffcf1;"></div>
<span class="t " style="left:685.40px;top:278.60px;letter-spacing:-0.141px;">ANOVA</span>
<span class="t " style="left:895.20px;top:278.60px;letter-spacing:0.762px;">df</span>
<span class="t " style="left:962.00px;top:278.60px;transform:scaleX(0.9069);transform-origin:0 0;">SS</span>
<span class="t " style="left:1092.10px;top:278.60px;transform:scaleX(0.9846);transform-origin:0 0;">MS</span>
<span class="t " style="left:1149.00px;top:278.60px;letter-spacing:0.375px;">F computed</span>
<span class="t " style="left:1228.00px;top:278.60px;">p</span>
<span class="t " style="left:685.40px;top:300.60px;letter-spacing:0.039px;">Regression</span>
<span class="t " style="left:895.70px;top:300.60px;">1</span>
<span class="t " style="left:962.00px;top:300.60px;letter-spacing:0.433px;">2<span style="margin-left:-0.7px;letter-spacing:-0.267px">1</span>308.5</span>
<span class="t " style="left:1092.10px;top:300.60px;letter-spacing:0.450px;">2<span style="margin-left:-0.7px;letter-spacing:-0.250px">1</span>308.5</span>
<span class="t " style="left:1150.20px;top:300.60px;letter-spacing:0.300px;"><span style="margin-left:-0.7px;letter-spacing:-0.400px">1</span>3959.5</span>
<span class="t " style="left:1228.00px;top:300.60px;letter-spacing:0.480px;">5.55<span style="margin-left:-0.7px;letter-spacing:-0.220px">1</span><span style="margin-left:-0.7px;letter-spacing:-0.220px">1</span>2E-<span style="margin-left:-0.7px;letter-spacing:-0.220px">1</span>6</span>
<span class="t " style="left:685.40px;top:322.60px;letter-spacing:0.005px;">Errors</span>
<span class="t " style="left:895.20px;top:322.60px;letter-spacing:1.006px;">569</span>
<span class="t " style="left:962.00px;top:322.60px;letter-spacing:0.700px;">868.546</span>
<span class="t " style="left:1093.30px;top:322.60px;letter-spacing:0.250px;"><span style="margin-left:-0.7px;letter-spacing:-0.450px">1</span>.52644</span>
<span class="t " style="left:685.40px;top:344.60px;letter-spacing:0.191px;">Total</span>
<span class="t " style="left:895.20px;top:344.60px;letter-spacing:0.356px;">570</span>
<span class="t " style="left:962.00px;top:344.60px;letter-spacing:0.369px;">22<span style="margin-left:-0.7px;letter-spacing:-0.331px">1</span>77</span>
<div class="r" style="left:682px;top:385px;width:912px;height:22px;background:#c6d8fa;"></div>
<div class="r" style="left:682px;top:407px;width:842px;height:22px;background:#fffcf1;"></div>
<span class="t " style="left:685.40px;top:388.50px;transform:scaleX(0.9492);transform-origin:0 0;">a =</span>
<span class="t " style="left:895.20px;top:388.50px;letter-spacing:0.119px;">Value of a</span>
<span class="t " style="left:962.00px;top:388.50px;letter-spacing:0.162px;">Std Error</span>
<span class="t " style="left:1092.10px;top:388.50px;letter-spacing:0.275px;">t-Value</span>
<span class="t " style="left:1149.00px;top:388.50px;letter-spacing:0.062px;">P &gt; |t|</span>
<span class="t " style="left:1228.00px;top:388.50px;letter-spacing:0.265px;">95% Lower Limits</span>
<span class="t " style="left:1343.30px;top:388.50px;letter-spacing:0.352px;">95% Upper Limits</span>
<span class="t " style="left:1459.80px;top:388.50px;transform:scaleX(0.8988);transform-origin:0 0;">VIF</span>
<span class="t " style="left:1488.50px;top:388.50px;letter-spacing:-0.171px;">SA %</span>
<span class="t " style="left:1527.70px;top:388.50px;">Recommendation</span>
<span class="t " style="left:685.40px;top:410.60px;letter-spacing:0.300px;">a<span style="margin-left:-0.7px;letter-spacing:-0.400px">1</span> · s^0.5 · t^-<span style="margin-left:-0.7px;letter-spacing:-0.400px">1</span></span>
<span class="t " style="left:895.20px;top:410.60px;letter-spacing:0.667px;">3.68464</span>
<span class="t " style="left:962.00px;top:410.60px;letter-spacing:0.593px;">0.03<span style="margin-left:-0.7px;letter-spacing:-0.107px">1</span><span style="margin-left:-0.7px;letter-spacing:-0.107px">1</span>86</span>
<span class="t " style="left:1093.30px;top:410.60px;color:#1a28c8;letter-spacing:0.067px;"><span style="margin-left:-0.7px;letter-spacing:-0.633px">1</span><span style="margin-left:-0.7px;letter-spacing:-0.633px">1</span>8.<span style="margin-left:-0.7px;letter-spacing:-0.633px">1</span>5<span style="margin-left:-0.7px;letter-spacing:-0.633px">1</span></span>
<span class="t " style="left:1149.00px;top:410.60px;color:#1a28c8;">0</span>
<span class="t " style="left:1228.00px;top:410.60px;color:#1a28c8;letter-spacing:0.600px;">3.62339</span>
<span class="t " style="left:1343.30px;top:410.60px;color:#1a28c8;letter-spacing:0.310px;">3.7459</span>
<span class="t " style="left:1459.80px;top:410.60px;transform:scaleX(0.9268);transform-origin:0 0;">N/A</span>
<span class="t " style="left:1488.50px;top:410.60px;transform:scaleX(0.9499);transform-origin:0 0;">N/A</span>
</div>
</body></html>
